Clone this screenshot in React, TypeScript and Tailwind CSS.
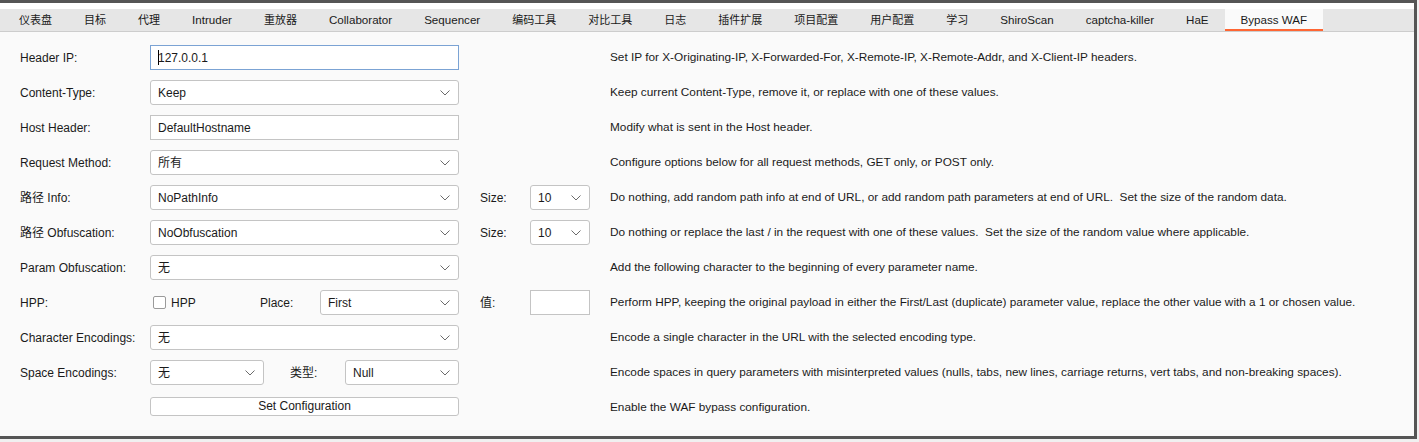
import type { ReactNode } from "react";

const tabs = [
  "仪表盘",
  "目标",
  "代理",
  "Intruder",
  "重放器",
  "Collaborator",
  "Sequencer",
  "编码工具",
  "对比工具",
  "日志",
  "插件扩展",
  "项目配置",
  "用户配置",
  "学习",
  "ShiroScan",
  "captcha-killer",
  "HaE",
  "Bypass WAF",
];

const font = "font-['Liberation_Sans','Noto_Sans_CJK_SC',sans-serif]";

function Chevron() {
  return (
    <svg width="10" height="6" viewBox="0 0 10 6" className="shrink-0">
      <path d="M0.5 0.5 L5 5 L9.5 0.5" fill="none" stroke="#6b6b6b" strokeWidth="1" />
    </svg>
  );
}

function Select({ value, width }: { value: string; width: string }) {
  return (
    <div
      className={`flex h-[25px] shrink-0 items-center justify-between rounded-[3px] border border-[#c4c4c4] bg-white pl-[7px] pr-[8px] ${width}`}
    >
      <span>{value}</span>
      <Chevron />
    </div>
  );
}

function TextBox({ value, focused }: { value: string; focused?: boolean }) {
  return (
    <div
      className={`flex h-[25px] w-[309px] items-center border bg-white pl-[7px] ${
        focused ? "border-[#7ba3d4]" : "border-[#c4c4c4]"
      }`}
    >
      {focused && <span className="mr-[-1px] h-[15px] w-px bg-black" />}
      <span>{value}</span>
    </div>
  );
}

type RowProps = {
  label: string;
  control: ReactNode;
  extra?: ReactNode;
  desc: string;
};

function Row({ label, control, extra, desc }: RowProps) {
  return (
    <div className="flex h-[35px] items-center whitespace-nowrap">
      <div className="w-[150px] shrink-0 pl-[20px]">{label}</div>
      <div className="flex w-[309px] shrink-0 items-center">{control}</div>
      <div className="flex w-[151px] shrink-0 items-center pl-[21px]">{extra}</div>
      <div className="whitespace-pre text-[11.8px]">{desc}</div>
    </div>
  );
}

function SizeBox({ label, value }: { label: string; value?: string }) {
  return (
    <>
      <span className="w-[50px]">{label}</span>
      {value !== undefined ? (
        <Select value={value} width="w-[60px]" />
      ) : (
        <div className="h-[25px] w-[60px] border border-[#c4c4c4] bg-white" />
      )}
    </>
  );
}

export default function App() {
  return (
    <div className={`h-[442px] w-[1419px] bg-[#f0f0f0] text-[12px] text-[#1a1a1a] ${font}`}>
      <div className="flex h-[439px] w-[1417px] flex-col border-t-[3px] border-r-[3px] border-b-[3px] border-[#555] bg-white">
        <div className="h-[6px]" />
        <div className="flex h-[23px] border-b border-[#cdcdcd] bg-[#e6e6e6] pl-[3px]">
          {tabs.map((t) => {
            const cjk = /[\u4e00-\u9fff]/.test(t);
            return (
              <div
                key={t}
                className={`flex items-center px-[16px] ${cjk ? "text-[11px]" : "text-[11.6px]"} ${
                  t === "Bypass WAF" ? "border-b-2 border-[#ff6633] bg-[#fafafa] pt-[2px]" : ""
                }`}
              >
                {t}
              </div>
            );
          })}
        </div>
        <div className="flex-1 bg-[#fafafa] pt-[8px]">
          <Row
            label="Header IP:"
            control={<TextBox value="127.0.0.1" focused />}
            desc="Set IP for X-Originating-IP, X-Forwarded-For, X-Remote-IP, X-Remote-Addr, and X-Client-IP headers."
          />
          <Row
            label="Content-Type:"
            control={<Select value="Keep" width="w-[309px]" />}
            desc="Keep current Content-Type, remove it, or replace with one of these values."
          />
          <Row
            label="Host Header:"
            control={<TextBox value="DefaultHostname" />}
            desc="Modify what is sent in the Host header."
          />
          <Row
            label="Request Method:"
            control={<Select value="所有" width="w-[309px]" />}
            desc="Configure options below for all request methods, GET only, or POST only."
          />
          <Row
            label="路径 Info:"
            control={<Select value="NoPathInfo" width="w-[309px]" />}
            extra={<SizeBox label="Size:" value="10" />}
            desc="Do nothing, add random path info at end of URL, or add random path parameters at end of URL.  Set the size of the random data."
          />
          <Row
            label="路径 Obfuscation:"
            control={<Select value="NoObfuscation" width="w-[309px]" />}
            extra={<SizeBox label="Size:" value="10" />}
            desc="Do nothing or replace the last / in the request with one of these values.  Set the size of the random value where applicable."
          />
          <Row
            label="Param Obfuscation:"
            control={<Select value="无" width="w-[309px]" />}
            desc="Add the following character to the beginning of every parameter name."
          />
          <Row
            label="HPP:"
            control={
              <>
                <div className="ml-[3px] h-[13px] w-[13px] rounded-[2px] border border-[#9a9a9a] bg-white" />
                <span className="ml-[5px] w-[89px]">HPP</span>
                <span className="w-[60px]">Place:</span>
                <Select value="First" width="w-[139px]" />
              </>
            }
            extra={<SizeBox label="值:" />}
            desc="Perform HPP, keeping the original payload in either the First/Last (duplicate) parameter value, replace the other value with a 1 or chosen value."
          />
          <Row
            label="Character Encodings:"
            control={<Select value="无" width="w-[309px]" />}
            desc="Encode a single character in the URL with the selected encoding type."
          />
          <Row
            label="Space Encodings:"
            control={
              <>
                <Select value="无" width="w-[114px]" />
                <span className="w-[81px] pl-[26px]">类型:</span>
                <Select value="Null" width="w-[114px]" />
              </>
            }
            desc="Encode spaces in query parameters with misinterpreted values (nulls, tabs, new lines, carriage returns, vert tabs, and non-breaking spaces)."
          />
          <Row
            label=""
            control={
              <div className="mb-[3px] flex h-[19px] w-[309px] items-center justify-center rounded-[3px] border border-[#c4c4c4] bg-white">
                Set Configuration
              </div>
            }
            desc="Enable the WAF bypass configuration."
          />
        </div>
      </div>
    </div>
  );
}
